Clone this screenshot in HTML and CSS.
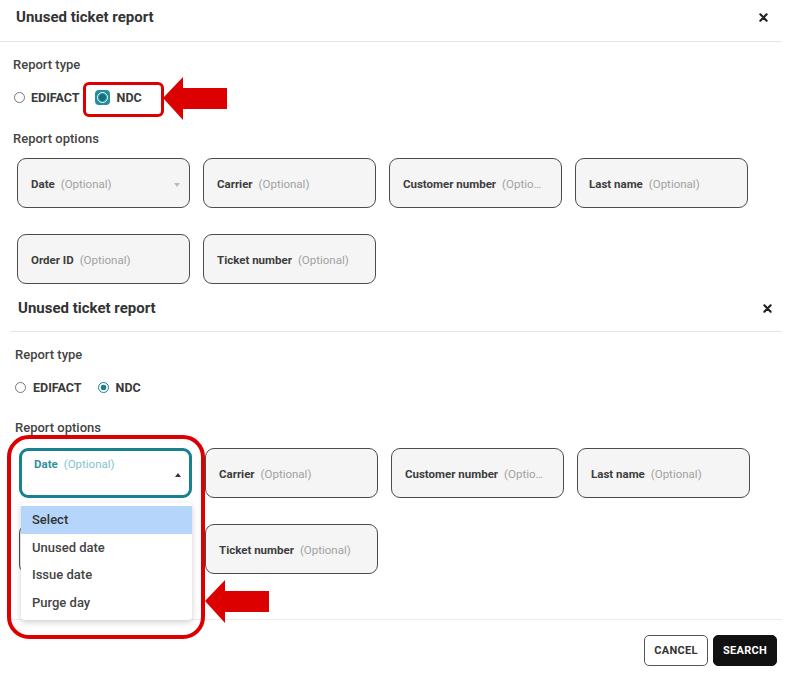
FILE: index.html
```html
<!DOCTYPE html>
<html lang="en">
<head>
<meta charset="utf-8">
<title>Unused ticket report</title>
<link rel="stylesheet" href="styles.css">
</head>
<body>
<main class="page">
  <section class="panel p1">
    <header class="hd">
      <h2 class="title">Unused ticket report</h2>
      <svg class="close" viewBox="0 0 10 10" width="9" height="9"><path d="M1.5 1.5 L8.5 8.5 M8.5 1.5 L1.5 8.5" stroke="#222" stroke-width="2.4" stroke-linecap="round"/></svg>
    </header>
    <div class="bd">
      <div class="lbl">Report type</div>
      <div class="radios">
        <label class="radio"><span class="rc"></span>EDIFACT</label>
        <label class="radio"><span class="ring"><span class="rc on"></span></span>NDC</label>
      </div>
      <div class="lbl opt">Report options</div>
      <div class="grid">
        <div class="field"><span class="txt"><b>Date</b><span class="o">(Optional)</span></span><span class="caret down"></span></div>
        <div class="field"><span class="txt"><b>Carrier</b><span class="o">(Optional)</span></span></div>
        <div class="field"><span class="txt"><b>Customer number</b><span class="o">(Optio…</span></span></div>
        <div class="field"><span class="txt"><b>Last name</b><span class="o">(Optional)</span></span></div>
        <div class="field"><span class="txt"><b>Order ID</b><span class="o">(Optional)</span></span></div>
        <div class="field"><span class="txt"><b>Ticket number</b><span class="o">(Optional)</span></span></div>
      </div>
    </div>
    <div class="mark box1"></div>
    <svg class="arrow a1" viewBox="0 0 66 46" width="66" height="46"><polygon points="0,22 20,1 20,12 64,12 64,33 20,33 20,44" fill="#dd0000"/></svg>
  </section>

  <section class="panel p2">
    <header class="hd">
      <h2 class="title">Unused ticket report</h2>
      <svg class="close" viewBox="0 0 10 10" width="9" height="9"><path d="M1.5 1.5 L8.5 8.5 M8.5 1.5 L1.5 8.5" stroke="#222" stroke-width="2.4" stroke-linecap="round"/></svg>
    </header>
    <div class="bd">
      <div class="lbl">Report type</div>
      <div class="radios">
        <label class="radio"><span class="rc"></span>EDIFACT</label>
        <label class="radio"><span class="rc on"></span>NDC</label>
      </div>
      <div class="lbl opt">Report options</div>
      <div class="grid">
        <div class="field focus"><span class="txt"><b>Date</b><span class="o">(Optional)</span></span><span class="caret up"></span></div>
        <div class="field"><span class="txt"><b>Carrier</b><span class="o">(Optional)</span></span></div>
        <div class="field"><span class="txt"><b>Customer number</b><span class="o">(Optio…</span></span></div>
        <div class="field"><span class="txt"><b>Last name</b><span class="o">(Optional)</span></span></div>
        <div class="field covered"></div>
        <div class="field"><span class="txt"><b>Ticket number</b><span class="o">(Optional)</span></span></div>
      </div>
      <footer class="ft">
        <button class="btn cancel">CANCEL</button>
        <button class="btn search">SEARCH</button>
      </footer>
    </div>
    <ul class="menu">
      <li class="sel">Select</li>
      <li>Unused date</li>
      <li>Issue date</li>
      <li>Purge day</li>
    </ul>
    <div class="mark box2"></div>
    <svg class="arrow a2" viewBox="0 0 66 46" width="66" height="46"><polygon points="0,22 20,1 20,12 64,12 64,33 20,33 20,44" fill="#dd0000"/></svg>
  </section>
</main>
</body>
</html>
```

FILE: styles.css
```css
* { box-sizing: border-box; }
html, body { margin: 0; padding: 0; background: #fff; }
body {
  font-family: Roboto, "Noto Sans", "Liberation Sans", sans-serif;
  color: #333;
  width: 786px;
  height: 675px;
  overflow: hidden;
}
.page { display: flex; flex-direction: column; }

.panel { position: relative; width: 782px; }
.p1 { height: 290px; }
.p2 { height: 385px; }

.hd {
  height: 42px;
  display: flex;
  justify-content: space-between;
  align-items: flex-start;
  border-bottom: 1px solid #e6e6e6;
}
.p1 .hd { padding: 7px 14px 0 16px; }
.p2 .hd { margin-left: 10px; padding: 8px 10px 0 8px; }
.title {
  margin: 0;
  font-size: 15px;
  line-height: 20px;
  font-weight: 700;
  color: #333;
}
.close { margin-top: 6px; }

.p1 .bd { padding-left: 13px; }
.p2 .bd { padding-left: 15px; }

.lbl {
  margin-top: 15px;
  font-size: 13px;
  line-height: 16px;
  font-weight: 500;
  color: #444;
}
.p1 .opt { margin-top: 25px; }
.p2 .opt { margin-top: 24px; }

.radios {
  margin-top: 15px;
  height: 18px;
  display: flex;
  align-items: center;
  gap: 16px;
}
.radio {
  display: flex;
  align-items: center;
  gap: 6px;
  font-size: 12.5px;
  font-weight: 700;
  color: #3a3a3a;
}
.p1 .radio { margin-left: 1px; }
.p2 .radio { gap: 7px; }
.rc {
  width: 11px;
  height: 11px;
  border-radius: 50%;
  border: 1px solid #777;
  background: #fff;
  display: inline-block;
}
.rc.on {
  border: 1.5px solid #17818f;
  background: radial-gradient(circle, #17818f 0 2.6px, #fff 3.1px);
}
.ring {
  width: 15px;
  height: 15px;
  margin: -2px;
  margin-right: 1px;
  border-radius: 4px;
  background: #2390a0;
  display: grid;
  place-items: center;
}
.ring .rc.on {
  width: 11px;
  height: 11px;
  border: 1.5px solid #fff;
  background: radial-gradient(circle, #156f7c 0 3.2px, #2390a0 3.6px);
}

.grid {
  margin-top: 11px;
  margin-left: 4px;
  display: grid;
  grid-template-columns: repeat(4, 173px);
  grid-auto-rows: 50px;
  column-gap: 13px;
  row-gap: 26px;
}
.p2 .grid { margin-top: 12px; }

.field {
  position: relative;
  border: 1.5px solid #4c4c4c;
  border-radius: 9px;
  background: #f5f5f5;
  display: flex;
  align-items: center;
  padding: 2px 12px 0 13px;
  font-size: 11.5px;
  line-height: 14px;
}
.txt {
  display: block;
  white-space: nowrap;
  color: #a5a5a5;
  min-width: 0;
}
.txt b { font-weight: 700; color: #3d3d3d; }
.txt .o { margin-left: 6px; color: #a2a2a2; }

.caret {
  position: absolute;
  right: 9px;
  top: 50%;
  width: 0;
  height: 0;
  border-left: 3.5px solid transparent;
  border-right: 3.5px solid transparent;
}
.caret.down { border-top: 4px solid #bbb; margin-top: 0; }
.caret.up { border-bottom: 4px solid #333; right: 8px; margin-top: 0; }

.field.focus {
  border: 3px solid #17818f;
  background: #fff;
  align-items: flex-start;
  padding: 6px 16px 0 12px;
}
.field.focus b { color: #2f8fa0; }
.field.focus .o { color: #86c3cc; font-weight: 400; }

.ft {
  margin-top: 45px;
  margin-left: -5px;
  border-top: 1px solid #ebebeb;
  padding: 15px 5px 0 0;
  display: flex;
  justify-content: flex-end;
  gap: 5px;
}
.btn {
  height: 31px;
  width: 64px;
  border-radius: 5px;
  font-family: Roboto, "Liberation Sans", sans-serif;
  font-size: 11px;
  font-weight: 700;
  letter-spacing: 0.3px;
  padding: 0;
}
.cancel { background: #fff; color: #333; border: 1.5px solid #555; }
.search { background: #111; color: #fff; border: 1.5px solid #111; }

.menu {
  position: absolute;
  left: 21px;
  top: 213px;
  width: 171px;
  height: 117px;
  margin: 0;
  padding: 3px 0;
  list-style: none;
  background: #fff;
  box-shadow: 0 2px 6px rgba(0,0,0,0.2);
  border-radius: 3px;
}
.menu li {
  height: 27.5px;
  line-height: 28.5px;
  padding-left: 11px;
  font-size: 13px;
  font-weight: 500;
  color: #444;
}
.menu li.sel { background: #b5d5fb; color: #333; }

.mark {
  position: absolute;
  border: 3px solid #dd0000;
}
.box1 { left: 83px; top: 82px; width: 81px; height: 35px; border-radius: 6px; }
.box2 { left: 7px; top: 145px; width: 198px; height: 204px; border-width: 4px; border-radius: 22px; }

.arrow { position: absolute; }
.a1 { left: 163px; top: 76px; }
.a2 { left: 205px; top: 289px; }
```
